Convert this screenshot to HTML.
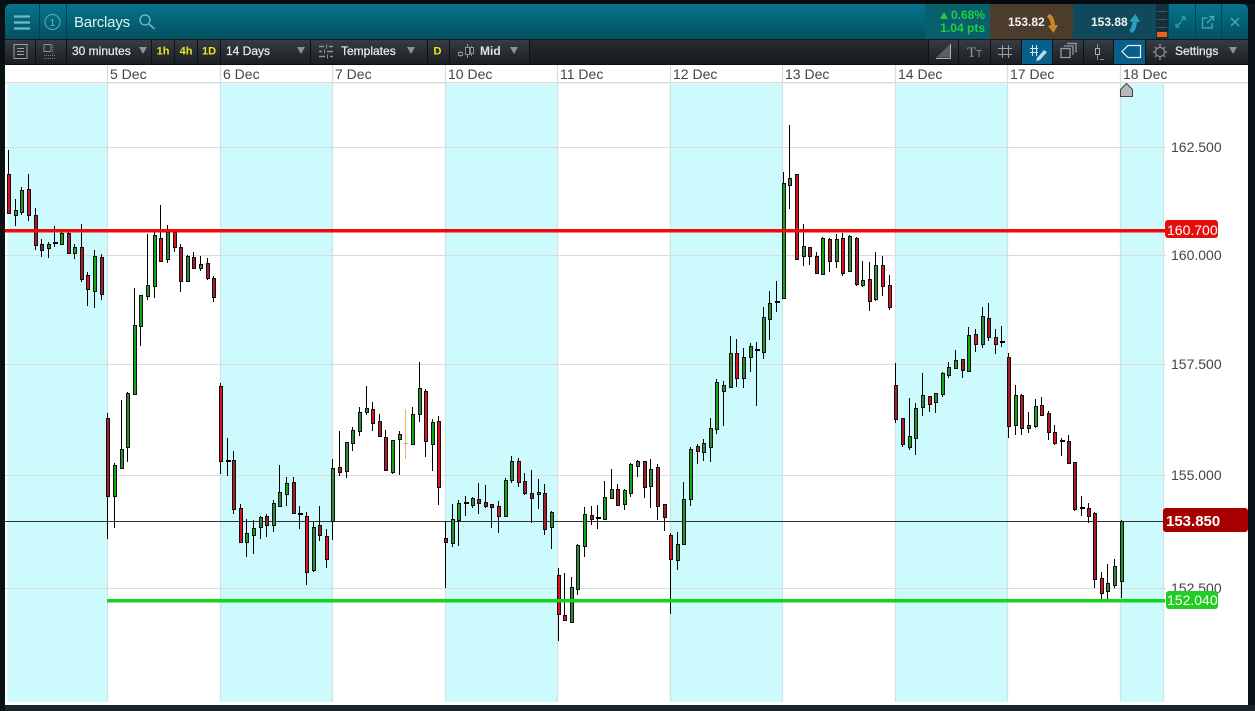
<!DOCTYPE html>
<html><head><meta charset="utf-8"><title>Barclays</title>
<style>
html,body{margin:0;padding:0;background:#0a1318;width:1255px;height:711px;overflow:hidden}
svg{display:block;position:absolute;left:0;top:0}
text{font-family:"Liberation Sans",sans-serif}
</style></head><body>
<svg width="1255" height="711" viewBox="0 0 1255 711" xmlns="http://www.w3.org/2000/svg">
<defs>
<linearGradient id="hd" x1="0" y1="0" x2="0" y2="1"><stop offset="0" stop-color="#06738c"/><stop offset="1" stop-color="#03505f"/></linearGradient>
<linearGradient id="tb" x1="0" y1="0" x2="0" y2="1"><stop offset="0" stop-color="#363c43"/><stop offset="1" stop-color="#1b1f23"/></linearGradient>
<linearGradient id="tb2" x1="0" y1="0" x2="0" y2="1"><stop offset="0" stop-color="#282c31"/><stop offset="1" stop-color="#17191c"/></linearGradient>
</defs>
<rect width="1255" height="711" fill="#0a1318"/>
<rect y="0" width="1255" height="4" fill="#050b10"/>
<rect x="0" y="705" width="1255" height="6" fill="#1c2329"/>
<rect x="0" y="0" width="5" height="711" fill="#0a1115"/>
<!-- header -->
<path d="M5 40V10q0-6 6-6H1242q6 0 6 6V40z" fill="url(#hd)"/>
<path d="M39.5 4V39M66.5 4V39" stroke="#03414f" stroke-width="1"/>
<path d="M14 16.5H30M14 22.5H30M14 28.5H30" stroke="#6fb9c7" stroke-width="2.2"/>
<circle cx="52.5" cy="22" r="7.5" fill="none" stroke="#4fa3b3" stroke-width="1.2"/>
<text x="52.5" y="26" font-size="10" fill="#6fb9c7" text-anchor="middle">1</text>
<text x="74" y="27" font-size="15" fill="#dcf0f4" letter-spacing="-.2">Barclays</text>
<circle cx="145" cy="20" r="5" fill="none" stroke="#79bccb" stroke-width="1.3"/>
<path d="M149 24L154.500 29" stroke="#79bccb" stroke-width="1.5"/>
<!-- quote -->
<rect x="925" y="4" width="65" height="35" fill="#0a5f6c"/>
<path d="M940 19l4-7 4 7z" fill="#22cc44"/>
<text x="985" y="19" font-size="12" font-weight="bold" fill="#1dd040" text-anchor="end">0.68%</text>
<text x="985" y="32" font-size="12" font-weight="bold" fill="#1dd040" text-anchor="end">1.04 pts</text>
<rect x="990" y="4" width="83" height="35" fill="#4c3c2b"/>
<text x="1008" y="26" font-size="12" font-weight="bold" fill="#f2f2f2">153.82</text>
<path d="M1049 14q5 1 6 11h3l-4.500 8-5.500-7 3-1q-1-6-4-8z" fill="#c9862a"/>
<rect x="1073" y="4" width="83" height="35" fill="#10495c"/>
<text x="1091" y="26" font-size="12" font-weight="bold" fill="#f2f2f2">153.88</text>
<path d="M1131 33q5-1 6-11h3l-4.500-8-6 7 3 1q-1 6-3 8z" fill="#2d9fbe"/>
<rect x="1156" y="4" width="12" height="35" fill="#14303a"/>
<path d="M1157 11.500h10M1157 19.500h10M1157 27.500h10" stroke="#3c5560" stroke-width="1"/>
<rect x="1157" y="32" width="10" height="5" fill="#e8641a"/>
<path d="M1168.500 4V39M1195.500 4V39M1221.500 4V39" stroke="#044453"/>
<path d="M1176 27l5-5M1176 27v-3.500M1176 27h3.500" stroke="#2f97ac" stroke-width="1.500" fill="none"/>
<path d="M1185 17l-4 4M1185 17v3.500M1185 17h-3.500" stroke="#2f97ac" stroke-width="1.500" fill="none"/>
<path d="M1212 23v5h-9.500V18h5M1207 23l6-6M1209 16.500h4.500V21" stroke="#4fa8ba" stroke-width="1.300" fill="none"/>
<path d="M1231 18l8 8M1239 18l-8 8" stroke="#4fa8ba" stroke-width="1.400"/>
<!-- toolbar -->
<rect x="5" y="39" width="1243" height="1" fill="#14191d"/>
<rect x="5" y="40" width="1243" height="24" fill="url(#tb2)"/>
<rect x="5" y="40" width="524" height="24" fill="url(#tb)"/>
<rect x="928" y="40" width="320" height="24" fill="url(#tb)"/>
<path d="M35.500 40V64M66.500 40V64M151.500 40V64M174.500 40V64M197.500 40V64M220.500 40V64M310.500 40V64M427.500 40V64M449.500 40V64M529.500 40V64M928.500 40V64M958.500 40V64M990.500 40V64M1021.500 40V64M1052.500 40V64M1083.500 40V64M1113.500 40V64M1145.500 40V64" stroke="#101316"/>
<rect x="14" y="44.500" width="13" height="14" fill="none" stroke="#9aa0a5"/>
<path d="M17 48.500h7M17 51.500h7M17 54.500h7" stroke="#9aa0a5"/>
<rect x="44" y="44.500" width="7" height="7" fill="none" stroke="#8a9095"/>
<path d="M44 55.500h12M44 58.500h12M53 45v10" stroke="#7a8085" stroke-dasharray="1 1"/>
<text x="72" y="55" font-size="12" fill="#e6e8ea" stroke="#e6e8ea" stroke-width=".25">30 minutes</text>
<path d="M139 47h8l-4 7z" fill="#8d9297"/>
<text x="163" y="54.500" font-size="11" font-weight="bold" fill="#e8e81c" text-anchor="middle">1h</text>
<text x="186" y="54.500" font-size="11" font-weight="bold" fill="#e8e81c" text-anchor="middle">4h</text>
<text x="209" y="54.500" font-size="11" font-weight="bold" fill="#e8e81c" text-anchor="middle">1D</text>
<text x="226" y="55" font-size="12" fill="#e6e8ea" stroke="#e6e8ea" stroke-width=".25">14 Days</text>
<path d="M297 47h8l-4 7z" fill="#8d9297"/>
<path d="M319 46.500h5M329 46.500h4M319 51.500h3M327 51.500h6M319 56.500h6M330 56.500h3" stroke="#8d9297" stroke-width="1.500"/>
<path d="M326.500 44.500v4M324.500 49.500v4M327.500 54.500v4" stroke="#8d9297"/>
<text x="341" y="55" font-size="12" fill="#e6e8ea" stroke="#e6e8ea" stroke-width=".25">Templates</text>
<path d="M407 47h8l-4 7z" fill="#8d9297"/>
<text x="437.500" y="54.500" font-size="11" font-weight="bold" fill="#e8e81c" text-anchor="middle">D</text>
<path d="M460.500 51v6M467.500 44v14M471.500 46v10" stroke="#8d9297"/>
<rect x="458.500" y="52.500" width="4" height="3" fill="#23272b" stroke="#8d9297"/>
<rect x="465.500" y="47.500" width="4" height="7" fill="#23272b" stroke="#8d9297"/>
<rect x="470.500" y="47.500" width="3" height="6" fill="#23272b" stroke="#8d9297"/>
<text x="480" y="55" font-size="12" font-weight="bold" fill="#dfe2e5">Mid</text>
<path d="M510 47h8l-4 7z" fill="#8d9297"/>
<!-- right tools -->
<path d="M936 57.500L950 44.500V57.500z" fill="#5a6066"/><path d="M936 58.500H951M950.500 44V58" stroke="#aab0b5" fill="none"/>
<text x="967" y="57" font-size="15" fill="#8f9499" style="font-family:'Liberation Serif',serif">T</text><text x="976" y="57" font-size="10" fill="#8f9499">T</text>
<path d="M998 48.500h14M998 54.500h14M1002.500 45v13M1008.500 45v13" stroke="#9aa0a5"/>
<rect x="1022" y="40" width="30" height="24" fill="#075f8a"/>
<path d="M1030 48.500h8M1030 52.500h8M1032.500 45v11M1036.500 45v11" stroke="#d8e6ee"/>
<path d="M1037 58l7-8 3 2-7 8-4 1z" fill="#b8dcec"/>
<rect x="1061" y="48.500" width="9" height="9" fill="none" stroke="#969ca1" stroke-width="1.300"/>
<path d="M1064 46h9v9M1067 43.500h9v9" fill="none" stroke="#969ca1" stroke-width="1.300"/>
<path d="M1097.500 44v16" stroke="#8d9297"/><rect x="1095.500" y="48.500" width="4" height="6" fill="#23272b" stroke="#aab0b5"/><path d="M1100 59.500h4" stroke="#8d9297"/>
<rect x="1114" y="40" width="31" height="24" fill="#075f8a"/>
<path d="M1122 51.500l6-6h12.500v12H1128z" fill="none" stroke="#e8f2f6" stroke-width="1.200"/>
<path d="M1160 44v4M1160 56v4M1153 52h3M1164 52h3M1155 47l2 2M1163 55l2 2M1165 47l-2 2M1155 57l2-2" stroke="#868b90" stroke-width="1.500"/>
<circle cx="1160" cy="52" r="4.500" fill="none" stroke="#868b90" stroke-width="1.300"/>
<text x="1175" y="55" font-size="12" fill="#e6e8ea" stroke="#e6e8ea" stroke-width=".25">Settings</text>
<path d="M1229 47h8l-4 7z" fill="#8d9297"/>
<rect x="5" y="64" width="1243" height="1" fill="#0c0f12"/>
<!-- chart base -->
<rect x="5" y="65" width="1243" height="640" fill="#fff"/>
<rect x="5" y="82" width="1243" height="1.500" fill="#dcdcdc"/>
<g fill="#cdfbfd">
<rect x="7.500" y="84" width="100" height="618"/>
<rect x="220" y="84" width="112.500" height="618"/>
<rect x="445" y="84" width="112.500" height="618"/>
<rect x="670" y="84" width="112.500" height="618"/>
<rect x="895" y="84" width="112.500" height="618"/>
<rect x="1120" y="84" width="43.500" height="618"/>
</g>
<path d="M107.500 65V702M220.500 65V702M332.500 65V702M445.500 65V702M557.500 65V702M670.500 65V702M782.500 65V702M895.500 65V702M1007.500 65V702M1120.500 65V702M1163.500 84V702" stroke="#cfe2e4" stroke-width="1.300" fill="none"/>
<path d="M5 147.500H1166M5 255.500H1166M5 364.500H1166M5 475.500H1166M5 588.500H1166" stroke="#dadcdc" stroke-width="1"/>
<g font-size="14" fill="#444">
<text x="110" y="79">5 Dec</text><text x="223" y="79">6 Dec</text><text x="335" y="79">7 Dec</text><text x="448" y="79">10 Dec</text><text x="560" y="79">11 Dec</text><text x="673" y="79">12 Dec</text><text x="785" y="79">13 Dec</text><text x="898" y="79">14 Dec</text><text x="1010" y="79">17 Dec</text><text x="1123" y="79">18 Dec</text>
<text x="1171" y="152">162.500</text><text x="1171" y="260">160.000</text><text x="1171" y="369">157.500</text><text x="1171" y="480">155.000</text><text x="1171" y="593">152.500</text>
</g>
<path d="M1120.500 89.500l6-6 6 6v7h-12z" fill="#b8b8b8" stroke="#444"/>
<!-- black price line -->
<path d="M5 521.500H1164" stroke="#333" stroke-width="1"/>
<!-- wicks -->
<path stroke="#000" stroke-width="1" fill="none" d="M8.500 150V213M15.500 199V226M21.500 187V215M28.500 174V221M35.500 208V250M41.500 239V257M48.500 242V258M54.500 226V247M61.500 232V245M68.500 232V254M74.500 244V259M81.500 224V282M87.500 272V306M94.500 250V308M101.500 254V300M107.500 413V539M114.500 463V528M121.500 400V468M127.500 392V462M134.500 288V394M140.500 295V346M147.500 234V300M154.500 232V298M160.500 205V261M167.500 225V263M174.500 231V252M180.500 244V292M187.500 255V282M193.500 252V268M200.500 256V271M207.500 258V280M213.500 276V302M220.500 383V474M227.500 438V476M233.500 451V514M240.500 504V543M246.500 519V557M253.500 520V554M260.500 516V539M266.500 514V537M273.500 500V532M279.500 465V506M286.500 477V506M293.500 477V513M299.500 506V529M306.500 512V585M313.500 522V572M319.500 506V541M326.500 529V568M332.500 459V540M339.500 431V476M346.500 442V478M352.500 427V451M359.500 407V436M366.500 386V415M372.500 402V431M379.500 414V436M385.500 430V470M392.500 440V474M399.500 431V475M412.500 407V444M419.500 362V422M425.500 389V457M432.500 419V471M438.500 416V505M445.500 521V588M452.500 504V547M458.500 500V546M465.500 496V516M472.500 497V508M478.500 483V514M485.500 485V508M491.500 504V528M498.500 501V533M505.500 478V516M511.500 456V483M518.500 458V487M524.500 473V495M531.500 470V523M538.500 479V509M544.500 484V535M551.500 511V549M558.500 568V641M564.500 573V621M571.500 577V622M577.500 544V595M584.500 507V557M591.500 506V525M597.500 505V529M604.500 481V520M611.500 469V499M617.500 484V505M624.500 489V510M630.500 463V497M637.500 460V477M644.500 461V498M650.500 459V508M657.500 464V520M664.500 504V531M670.500 533V614M677.500 532V570M683.500 482V544M690.500 447V506M697.500 444V464M703.500 439V461M710.500 418V462M716.500 379V434M723.500 381V426M730.500 336V387M736.500 339V387M743.500 348V388M750.500 343V372M756.500 342V406M763.500 307V359M769.500 291V340M776.500 281V312M783.500 172V298M789.500 125V209M796.500 174V259M803.500 224V266M809.500 247V265M816.500 252V273M822.500 237V275M829.500 238V272M836.500 234V268M842.500 233V276M849.500 235V271M856.500 237V286M862.500 261V287M869.500 262V311M875.500 252V301M882.500 256V296M889.500 275V310M895.500 363V423M902.500 418V447M909.500 398V450M915.500 403V455M922.500 373V416M929.500 396V412M935.500 393V413M942.500 372V397M948.500 362V378M955.500 350V368M962.500 359V378M968.500 327V372M975.500 329V352M982.500 307V348M988.500 303V341M995.500 329V354M1001.500 326V347M1008.500 353V438M1015.500 385V435M1021.500 394V435M1028.500 412V433M1035.500 399V428M1041.500 397V416M1048.500 411V440M1054.500 425V445M1061.500 438V456M1068.500 435V463M1074.500 462V511M1081.500 496V516M1088.500 503V523M1094.500 512V588M1101.500 572V599M1107.500 564V599M1114.500 559V588M1121.500 520V598"/>
<path stroke="#e6b566" d="M405.500 409V459M403 443.500h5" fill="none"/>
<!-- dojis -->
<path fill="#000" d="M53 242h5v2h-5zM226 460h5v2h-5zM298 513h5v2h-5zM464 502h5v2h-5zM596 517h5v2h-5zM755 349h5v2h-5zM775 301h5v2h-5zM1000 341h5v2h-5zM1060 440h5v2h-5zM1080 507h5v2h-5z"/>
<!-- bright red -->
<path stroke="#111" fill="#e01020" d="M7.500 174.500h3V213.500h-3zM27.500 189.500h3V215.500h-3zM86.500 275.500h3V289.500h-3zM159.500 238.500h3V261.500h-3zM173.500 232.500h3V247.500h-3zM219.500 386.500h3V461.500h-3zM239.500 508.500h3V542.500h-3zM305.500 516.500h3V572.500h-3zM325.500 536.500h3V559.500h-3zM371.500 409.500h3V423.500h-3zM424.500 391.500h3V441.500h-3zM437.500 421.500h3V487.500h-3zM497.500 506.500h3V516.500h-3zM517.500 461.500h3V482.500h-3zM557.500 575.500h3V614.500h-3zM563.500 615.500h3V620.500h-3zM669.500 535.500h3V559.500h-3zM696.500 446.500h3V451.500h-3zM735.500 353.500h3V378.500h-3zM795.500 174.500h3V259.500h-3zM841.500 238.500h3V273.500h-3zM868.500 279.500h3V301.500h-3zM881.500 265.500h3V286.500h-3zM888.500 285.500h3V307.500h-3zM928.500 396.500h3V404.500h-3zM974.500 334.500h3V344.500h-3zM994.500 337.500h3V344.500h-3zM1040.500 405.500h3V415.500h-3zM1053.500 432.500h3V443.500h-3zM1100.500 578.500h3V593.500h-3z"/>
<!-- dark red -->
<path stroke="#111" fill="#a81c28" d="M34.500 215.500h3V245.500h-3zM40.500 244.500h3V250.500h-3zM67.500 233.500h3V253.500h-3zM80.500 247.500h3V279.500h-3zM100.500 257.500h3V294.500h-3zM106.500 418.500h3V496.500h-3zM179.500 247.500h3V281.500h-3zM192.500 257.500h3V268.500h-3zM206.500 263.500h3V278.500h-3zM212.500 278.500h3V297.500h-3zM232.500 460.500h3V509.500h-3zM265.500 516.500h3V525.500h-3zM292.500 482.500h3V513.500h-3zM318.500 525.500h3V535.500h-3zM338.500 467.500h3V472.500h-3zM378.500 421.500h3V436.500h-3zM384.500 437.500h3V470.500h-3zM444.500 538.500h3V542.500h-3zM477.500 499.500h3V503.500h-3zM484.500 502.500h3V506.500h-3zM490.500 504.500h3V507.500h-3zM523.500 481.500h3V493.500h-3zM530.500 493.500h3V498.500h-3zM543.500 493.500h3V529.500h-3zM590.500 515.500h3V519.500h-3zM616.500 489.500h3V505.500h-3zM643.500 461.500h3V487.500h-3zM656.500 467.500h3V506.500h-3zM663.500 504.500h3V517.500h-3zM808.500 247.500h3V256.500h-3zM815.500 256.500h3V273.500h-3zM828.500 239.500h3V261.500h-3zM855.500 238.500h3V284.500h-3zM894.500 385.500h3V419.500h-3zM901.500 418.500h3V444.500h-3zM961.500 359.500h3V370.500h-3zM987.500 318.500h3V337.500h-3zM1007.500 357.500h3V426.500h-3zM1020.500 395.500h3V428.500h-3zM1047.500 413.500h3V432.500h-3zM1067.500 441.500h3V463.500h-3zM1073.500 462.500h3V509.500h-3zM1087.500 508.500h3V516.500h-3zM1093.500 513.500h3V579.500h-3z"/>
<!-- bright green -->
<path stroke="#111" fill="#12a518" d="M60.500 233.500h3V244.500h-3zM73.500 247.500h3V253.500h-3zM93.500 256.500h3V291.500h-3zM113.500 465.500h3V496.500h-3zM133.500 325.500h3V394.500h-3zM139.500 295.500h3V326.500h-3zM153.500 235.500h3V286.500h-3zM245.500 533.500h3V542.500h-3zM252.500 528.500h3V535.500h-3zM285.500 483.500h3V494.500h-3zM391.500 440.500h3V472.500h-3zM411.500 414.500h3V444.500h-3zM431.500 422.500h3V444.500h-3zM457.500 503.500h3V520.500h-3zM504.500 480.500h3V516.500h-3zM583.500 514.500h3V546.500h-3zM603.500 497.500h3V519.500h-3zM623.500 490.500h3V504.500h-3zM629.500 464.500h3V493.500h-3zM689.500 449.500h3V499.500h-3zM715.500 382.500h3V429.500h-3zM782.500 183.500h3V298.500h-3zM821.500 238.500h3V274.500h-3zM908.500 436.500h3V447.500h-3zM941.500 373.500h3V394.500h-3zM967.500 335.500h3V371.500h-3zM1014.500 395.500h3V425.500h-3zM1034.500 406.500h3V426.500h-3z"/>
<!-- dark green -->
<path stroke="#111" fill="#2d8a36" d="M14.500 210.500h3V215.500h-3zM20.500 190.500h3V212.500h-3zM47.500 244.500h3V248.500h-3zM166.500 232.500h3V259.500h-3zM186.500 256.500h3V281.500h-3zM199.500 264.500h3V268.500h-3zM120.500 449.500h3V468.500h-3zM126.500 393.500h3V447.500h-3zM146.500 285.500h3V296.500h-3zM259.500 517.500h3V527.500h-3zM272.500 503.500h3V525.500h-3zM278.500 492.500h3V506.500h-3zM312.500 527.500h3V570.500h-3zM331.500 468.500h3V521.500h-3zM345.500 442.500h3V471.500h-3zM351.500 430.500h3V443.500h-3zM358.500 412.500h3V431.500h-3zM365.500 408.500h3V412.500h-3zM398.500 434.500h3V439.500h-3zM418.500 388.500h3V414.500h-3zM451.500 519.500h3V543.500h-3zM471.500 498.500h3V505.500h-3zM510.500 461.500h3V480.500h-3zM537.500 492.500h3V494.500h-3zM550.500 512.500h3V527.500h-3zM570.500 587.500h3V622.500h-3zM576.500 545.500h3V589.500h-3zM610.500 489.500h3V498.500h-3zM636.500 461.500h3V466.500h-3zM649.500 469.500h3V486.500h-3zM676.500 544.500h3V560.500h-3zM682.500 499.500h3V544.500h-3zM702.500 443.500h3V452.500h-3zM709.500 428.500h3V447.500h-3zM722.500 385.500h3V391.500h-3zM729.500 353.500h3V387.500h-3zM742.500 357.500h3V378.500h-3zM749.500 346.500h3V357.500h-3zM762.500 317.500h3V352.500h-3zM768.500 303.500h3V319.500h-3zM788.500 178.500h3V185.500h-3zM802.500 246.500h3V256.500h-3zM835.500 239.500h3V261.500h-3zM848.500 236.500h3V271.500h-3zM861.500 280.500h3V285.500h-3zM874.500 265.500h3V299.500h-3zM914.500 408.500h3V438.500h-3zM921.500 395.500h3V407.500h-3zM934.500 393.500h3V402.500h-3zM947.500 367.500h3V375.500h-3zM954.500 360.500h3V368.500h-3zM981.500 316.500h3V344.500h-3zM1027.500 425.500h3V428.500h-3zM1106.500 583.500h3V591.500h-3zM1113.500 566.500h3V585.500h-3zM1120.500 521.500h3V581.500h-3z"/>
<!-- levels -->
<rect x="5" y="229" width="1160" height="3.500" fill="#f00a0a"/>
<rect x="107" y="599" width="1058" height="3.500" fill="#10d818"/>
<rect x="1165" y="220" width="53" height="18" rx="3" fill="#e60d0d"/>
<text x="1167" y="235" font-size="14" fill="#fff">160.700</text>
<rect x="1166" y="591" width="52" height="18" rx="3" fill="#22cc22"/>
<text x="1167" y="605" font-size="14" fill="#fff">152.040</text>
<rect x="1163" y="508" width="85" height="24" rx="3" fill="#a80000"/>
<text x="1166" y="526" font-size="15" font-weight="bold" fill="#fff">153.850</text>
</svg>
</body></html>
